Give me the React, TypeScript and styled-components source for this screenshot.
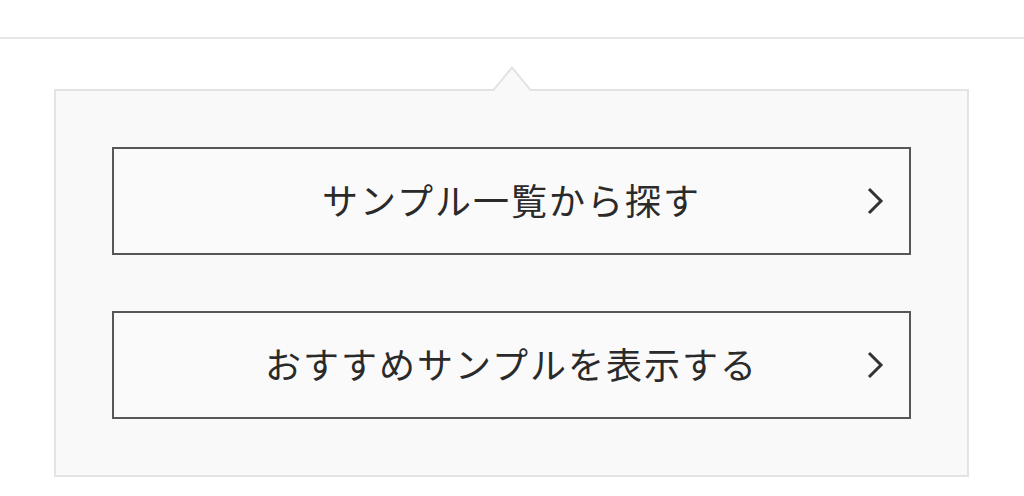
import React from "react";
import styled, { createGlobalStyle } from "styled-components";

const Global = createGlobalStyle`
  html, body { margin: 0; padding: 0; background: #ffffff; }
  body { font-family: "Noto Sans CJK JP", "Noto Sans", sans-serif; }
`;

const Header = styled.div`
  height: 37px;
  border-bottom: 2px solid #e6e6e6;
`;

const Panel = styled.div`
  position: relative;
  margin: 50px 55px 0 54px;
  border: 2px solid #e3e3e3;
  background: #f9f9f9;
  padding: 56px;
  display: flex;
  flex-direction: column;
  gap: 56px;
`;

const Caret = styled.svg`
  position: absolute;
  top: -25px;
  left: 50%;
  transform: translateX(-50%);
  display: block;
`;

const Button = styled.button`
  position: relative;
  height: 108px;
  width: 100%;
  border: 2px solid #575757;
  background: #fafafa;
  display: flex;
  align-items: center;
  justify-content: center;
  font-family: "Noto Sans CJK JP", sans-serif;
  font-size: 36px;
  letter-spacing: 2px;
  color: #2a2a2a;
  padding: 0 0 5px 0;
  cursor: pointer;
`;

const Label = styled.span`
  line-height: 1;
`;

const Chevron = styled.svg`
  position: absolute;
  right: 25px;
  top: 50%;
  transform: translateY(-50%);
`;

const Arrow = () => (
  <Chevron width="18" height="28" viewBox="0 0 18 28">
    <polyline points="3,2 15,14 3,26" fill="none" stroke="#333" strokeWidth="3" />
  </Chevron>
);

export default function App() {
  return (
    <>
      <Global />
      <Header />
      <Panel>
        <Caret width="38" height="27" viewBox="0 0 38 27">
          <polygon points="1,24 19,2 37,24 37,27 1,27" fill="#f9f9f9" />
          <polyline points="0,24.5 19,1.5 38,24.5" fill="none" stroke="#e3e3e3" strokeWidth="2" />
        </Caret>
        <Button>
          <Label>サンプル一覧から探す</Label>
          <Arrow />
        </Button>
        <Button>
          <Label>おすすめサンプルを表示する</Label>
          <Arrow />
        </Button>
      </Panel>
    </>
  );
}
